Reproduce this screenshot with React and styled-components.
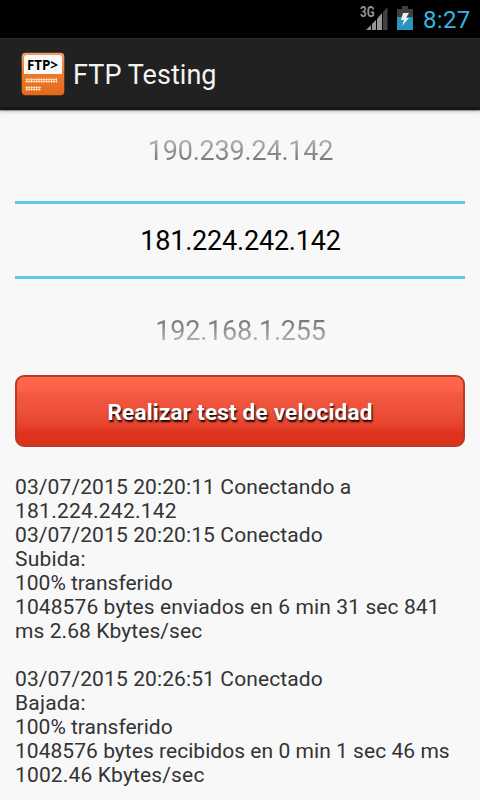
import React from "react";
import styled, { createGlobalStyle } from "styled-components";

const GlobalStyle = createGlobalStyle`
  * { box-sizing: border-box; }
  body { margin: 0; background: #f8f8f8; font-family: Roboto, sans-serif; }
`;

const Screen = styled.div`
  display: flex;
  flex-direction: column;
  width: 480px;
  height: 800px;
  overflow: hidden;
  background: #f8f8f8;
`;

const StatusBar = styled.header`
  display: flex;
  justify-content: flex-end;
  align-items: flex-start;
  flex: none;
  height: 38px;
  padding-right: 10px;
  background: #000;
`;

const SignalIcon = styled.svg`
  width: 30px;
  height: 26px;
  margin: 5px 7px 0 0;
`;

const BatteryIcon = styled.svg`
  width: 16px;
  height: 24px;
  margin: 6px 10px 0 0;
`;

const Clock = styled.time`
  width: 47px;
  margin-top: 6px;
  color: #33b5e5;
  font-size: 24px;
  line-height: 29px;
  letter-spacing: 0.3px;
  white-space: nowrap;
`;

const ActionBar = styled.div`
  display: flex;
  align-items: center;
  flex: none;
  height: 72px;
  padding-left: 21px;
  background: #212121;
  border-top: 1px solid #2c2c2c;
  border-bottom: 3px solid #171717;
  box-shadow: 0 1px 1px rgba(0, 0, 0, 0.3), 0 2px 4px rgba(0, 0, 0, 0.16);
`;

const AppIcon = styled.svg`
  width: 44px;
  height: 44px;
  margin-top: 1px;
`;

const Title = styled.h1`
  margin: 4px 0 0 8px;
  color: #f3f3f3;
  font-size: 27px;
  font-weight: 400;
  line-height: 32px;
  letter-spacing: 0.05px;
`;

const Content = styled.main`
  display: flex;
  flex-direction: column;
  padding: 0 15px;
`;

const Picker = styled.div`
  display: flex;
  flex-direction: column;
  height: 265px;
  padding-top: 1px;
`;

const PickerItem = styled.div`
  height: 90px;
  padding-top: ${(p) => (p.$edge === "top" ? 24 : 36)}px;
  padding-left: 1px;
  text-align: center;
  font-size: 27px;
  line-height: 32px;
  letter-spacing: -0.2px;
  color: transparent;
  background: ${(p) =>
    p.$edge === "top"
      ? "linear-gradient(#b4b4b4 28px, #777 50px)"
      : "linear-gradient(#777 42px, #b4b4b4 63px)"};
  background-clip: text;
`;

const SelectedItem = styled.div`
  flex: none;
  height: 78px;
  padding-left: 1px;
  border-top: 3px solid #67c8e5;
  border-bottom: 3px solid #67c8e5;
  color: #000;
  text-align: center;
  font-size: 27px;
  line-height: 75px;
  letter-spacing: -0.2px;
`;

const TestButton = styled.button`
  height: 72px;
  padding: 2px 0 0;
  border: 2px solid #b93a2b;
  border-radius: 9px;
  background: linear-gradient(#ff684c 0, #fb6144 14px, #f15840 18px, #ed503a 34px, #e84730 44px, #e53f29 50px, #dd351f 55px, #dc2f19 68px);
  color: #fff;
  font: 700 22.5px/28px Roboto, sans-serif;
  letter-spacing: 0.2px;
  text-shadow: 1px 2px 2px #000;
`;

const Log = styled.div`
  margin-top: 28px;
  color: #333;
  font-size: 21px;
  line-height: 24px;
`;

const LogLine = styled.div`
  height: 24px;
  letter-spacing: ${(p) => p.$spacing}px;
  white-space: nowrap;
`;

const lines = [
  ["03/07/2015 20:20:11 Conectando a", 0.11],
  ["181.224.242.142", 0.24],
  ["03/07/2015 20:20:15 Conectado", 0.11],
  ["Subida:", 0.2],
  ["100% transferido", 0],
  ["1048576 bytes enviados en 6 min 31 sec 841", 0.1],
  ["ms 2.68 Kbytes/sec", 0.08],
  ["", 0],
  ["03/07/2015 20:26:51 Conectado", 0.11],
  ["Bajada:", 0.2],
  ["100% transferido", 0],
  ["1048576 bytes recibidos en 0 min 1 sec 46 ms", 0.04],
  ["1002.46 Kbytes/sec", 0.15],
];

function Signal() {
  return (
    <SignalIcon viewBox="0 0 30 26">
      <text x="0" y="12" fill="#969696" fontSize="14" fontWeight="700" textLength="14.5" lengthAdjust="spacingAndGlyphs">3G</text>
      <path d="M6 25L11 20V25ZM12 19L16 15V25H12ZM17 14L22 8V25H17Z" fill="#969696" />
      <path d="M23 7L27.5 2V25H23Z" fill="#424242" />
    </SignalIcon>
  );
}

function Battery() {
  return (
    <BatteryIcon viewBox="0 0 16 24">
      <path d="M5 0H11V3H16V11H0V3H5Z" fill="#404040" />
      <path d="M0 11H16V24H0Z" fill="#2b94bb" />
      <path d="M6 7H12L9 12H12L5 20L7 14H4Z" fill="#eee" />
    </BatteryIcon>
  );
}

function FtpIcon() {
  return (
    <AppIcon viewBox="0 0 44 44">
      <defs>
        <linearGradient id="orange" x2="0" y2="1">
          <stop stopColor="#f39a6b" />
          <stop offset=".5" stopColor="#ed7a2b" />
          <stop offset="1" stopColor="#e3691a" />
        </linearGradient>
      </defs>
      <rect x=".7" y=".7" width="42.6" height="42.6" rx="4" fill="url(#orange)" />
      <path d="M3 22V6Q3 3 6 3H38Q41 3 41 6V22Z" fill="#fafafa" />
      <text x="6" y="18" fill="#000" fontFamily="Open Sans" fontSize="14.5" fontWeight="700" textLength="31" lengthAdjust="spacingAndGlyphs">FTP&gt;</text>
      <g fill="none" stroke="#ffe0c4">
        <path d="M4.5 27.5H36M4.5 29.5H36M4.5 35.5H20M4.5 37.5H20" strokeWidth=".8" />
        <path d="M5 28.5H36M5 36.5H20" strokeWidth="4.4" strokeDasharray="1.1 1.4" />
      </g>
    </AppIcon>
  );
}

export default function App() {
  return (
    <>
      <GlobalStyle />
      <Screen>
        <StatusBar>
          <Signal />
          <Battery />
          <Clock>8:27</Clock>
        </StatusBar>
        <ActionBar>
          <FtpIcon />
          <Title>FTP Testing</Title>
        </ActionBar>
        <Content>
          <Picker>
            <PickerItem $edge="top">190.239.24.142</PickerItem>
            <SelectedItem>181.224.242.142</SelectedItem>
            <PickerItem $edge="bottom">192.168.1.255</PickerItem>
          </Picker>
          <TestButton>Realizar test de velocidad</TestButton>
          <Log>
            {lines.map(([text, spacing], index) => (
              <LogLine key={index} $spacing={spacing}>{text}</LogLine>
            ))}
          </Log>
        </Content>
      </Screen>
    </>
  );
}
